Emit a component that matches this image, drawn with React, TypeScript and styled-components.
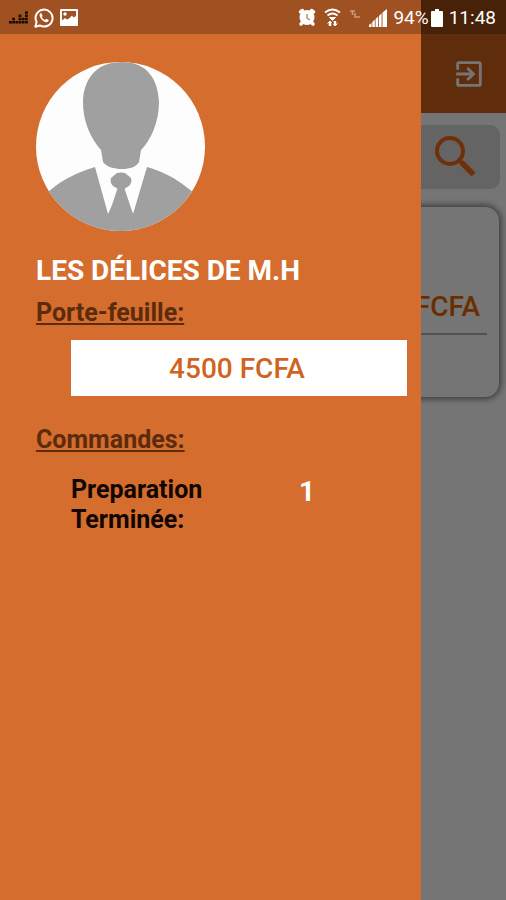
import React from "react";
import styled, { createGlobalStyle } from "styled-components";

const GlobalStyle = createGlobalStyle`
  * { box-sizing: border-box; }
  body { margin: 0; font-family: Roboto, "Liberation Sans", sans-serif; }
  button, input { font: inherit; }
`;

const Screen = styled.div`
  position: relative;
  min-height: 100vh;
  overflow: hidden;
  background: #fff;
`;

const Page = styled.main`
  display: flex;
  flex-direction: column;
`;

const AppBar = styled.header`
  display: flex;
  align-items: center;
  justify-content: flex-end;
  height: 113px;
  padding: 34px 20px 0;
  background: #d2621c;
`;

const IconButton = styled.button`
  display: flex;
  padding: 0;
  border: 0;
  background: none;
  color: ${(p) => p.color};
`;

const SearchForm = styled.form`
  display: flex;
  align-items: center;
  height: 64px;
  margin: 12px 6px 0;
  padding: 0 24px 2px;
  border-radius: 10px;
  background: #d9d9d9;
`;

const SearchInput = styled.input`
  flex: 1;
  min-width: 0;
  border: 0;
  background: transparent;
  font-size: 24px;
`;

const OrderCard = styled.article`
  display: flex;
  flex-direction: column;
  height: 190px;
  margin: 18px 7px 0;
  padding: 80px 12px 0;
  border-radius: 14px;
  background: #fff;
  box-shadow: 0 0 6px 2px rgba(0, 0, 0, 0.5);
`;

const OrderPrice = styled.div`
  padding: 0 7px 6px 0;
  border-bottom: 2px solid #b4b4b4;
  color: #e86400;
  font-size: 28px;
  font-weight: 500;
  line-height: 40px;
  text-align: right;
`;

const Scrim = styled.div`
  position: absolute;
  inset: 0;
  background: rgba(0, 0, 0, 0.54);
`;

const Drawer = styled.aside`
  position: absolute;
  inset: 0 85px 0 0;
  display: flex;
  flex-direction: column;
  align-items: stretch;
  padding: 62px 14px 0 36px;
  background: #d46d2d;
`;

const Avatar = styled.svg`
  width: 169px;
  height: 169px;
  border-radius: 50%;
  background: #fdfdfd;
`;

const ShopName = styled.h1`
  margin: 20px 0 0;
  color: #fff;
  font-size: 28px;
  font-weight: 700;
  line-height: 40px;
  white-space: nowrap;
`;

const SectionTitle = styled.h2<{ $gap: number }>`
  margin: ${(p) => p.$gap}px 0 0;
  color: #5c2b0c;
  font-size: 25px;
  font-weight: 700;
  line-height: 42px;
  text-decoration: underline;
  text-decoration-thickness: 2px;
  text-underline-offset: 2px;
  text-decoration-skip-ink: none;
`;

const Balance = styled.div`
  margin: 6px 0 0 35px;
  padding: 2px 4px 0 0;
  background: #fff;
  color: #d0641f;
  font-size: 28px;
  font-weight: 500;
  line-height: 54px;
  text-align: center;
`;

const OrderStats = styled.dl`
  display: grid;
  grid-template-columns: 2fr 1fr;
  margin: 14px 0 0 35px;
`;

const StatLabel = styled.dt`
  max-width: 150px;
  color: #120600;
  font-size: 25px;
  font-weight: 700;
  line-height: 30px;
`;

const StatValue = styled.dd`
  margin: 0;
  padding-left: 4px;
  color: #fff;
  font-size: 28px;
  font-weight: 700;
  line-height: 34px;
`;

const StatusBar = styled.div`
  position: absolute;
  inset: 0 0 auto;
  display: flex;
  align-items: center;
  justify-content: space-between;
  height: 34px;
  padding: 1px 10px 0 9px;
  background: rgba(0, 0, 0, 0.25);
  color: #fff;
  font-size: 19px;
  line-height: 34px;
`;

const StatusGroup = styled.div<{ $gap: number }>`
  display: flex;
  align-items: center;
  gap: ${(p) => p.$gap}px;
`;

const Equalizer = () => {
  const heights = [1, 2, 1, 3, 2, 4];
  return (
    <svg width="19" height="20" viewBox="0 0 19 20" fill="#1c0c04" aria-hidden="true">
      {heights.map((n, col) =>
        Array.from({ length: n }, (_, row) => (
          <rect key={`${col}-${row}`} x={col * 3.2} y={13 - row * 3.2} width="2.8" height="2.5" />
        )),
      )}
    </svg>
  );
};

const Chat = () => (
  <svg width="20" height="20" viewBox="0 0 24 24" fill="none" aria-hidden="true">
    <path d="M1.600 22.400l1.500-5.500A10.200 10.200 0 1 1 7 20.900z" stroke="#fff" strokeWidth="2.400" strokeLinejoin="round" />
    <path d="M8.800 6.200c-.8-.4-2 .8-2.100 2.200-.1 2 1.400 4.400 3.400 6.300 2 1.800 4.400 2.800 6 2.100 1.200-.5 1.800-1.600 1.500-2.400l-2.900-1.500-1.500 1.500c-1.700-.7-3-2-3.800-3.500l1-1.400z" fill="#fff" />
  </svg>
);

const Picture = () => (
  <svg width="18" height="17" viewBox="0 0 18 17" aria-hidden="true">
    <path fillRule="evenodd" fill="#fff" d="M1 0h16a1 1 0 0 1 1 1v15a1 1 0 0 1-1 1H1a1 1 0 0 1-1-1V1a1 1 0 0 1 1-1zM2 2v9.500l3-2.500 2 1.500 2-1 3-3 1.500 2L16 7V2z" />
    <circle cx="5" cy="5" r="1.700" fill="#fff" />
  </svg>
);

const Alarm = () => (
  <svg width="18" height="19" viewBox="0 0 18 19" aria-hidden="true">
    <g stroke="#fff" strokeWidth="3.500" strokeLinecap="round">
      <path d="M2.500 4l2-1.500M15.500 4l-2-1.500M3 16l2-2M15 16l-2-2" />
    </g>
    <circle cx="9" cy="9.500" r="7.500" fill="#fff" />
    <path d="M9 6v4l3 2" fill="none" stroke="#b98c76" strokeWidth="1.500" />
  </svg>
);

const Wifi = () => (
  <svg width="17" height="19" viewBox="0 0 17 19" fill="none" stroke="#fff" aria-hidden="true">
    <path d="M1 4.500q7.500-6 15 0M3.500 7.500q5-4 10 0" strokeWidth="2" />
    <path d="M5.500 9.500h6l-3 3z" fill="#fff" strokeWidth="1" />
    <path d="M6 18v-4M11 13v4" strokeWidth="2.500" />
    <path d="M3.500 15.500l2.500-2.500 1.500 2M9.500 16l1.500 2 2.500-2.500" strokeWidth="1" />
  </svg>
);

const Lte = () => (
  <svg width="12" height="20" viewBox="0 0 12 20" fill="none" stroke="#cf9b7c" aria-hidden="true">
    <path d="M1 3h5M3.500 3v4M6 5v4h5" strokeWidth="1.500" />
  </svg>
);

const Signal = () => (
  <svg width="18" height="18" viewBox="0 0 18 18" fill="#fff" aria-hidden="true">
    <path d="M0 18v-2l2.500-2v4zM3.300 18v-5l2.500-2.500V18zM6.600 18V10l2.500-2.500V18zM9.900 18V7l2.700-2.700V18zM13.500 18V3.500L18 0v18z" />
  </svg>
);

const Battery = () => (
  <svg width="12" height="18" viewBox="0 0 12 18" fill="#fff" aria-hidden="true">
    <path d="M4 0h4v2h3a1 1 0 0 1 1 1v14a1 1 0 0 1-1 1H1a1 1 0 0 1-1-1V3a1 1 0 0 1 1-1h3z" />
  </svg>
);

const Exit = () => (
  <svg width="34" height="34" viewBox="0 0 24 24" fill="currentColor" aria-hidden="true">
    <path d="M10.090 15.590L11.500 17l5-5-5-5-1.410 1.410L12.670 11H3v2h9.670l-2.580 2.590zM19 3H5a2 2 0 0 0-2 2v4h2V5h14v14H5v-4H3v4a2 2 0 0 0 2 2h14a2 2 0 0 0 2-2V5a2 2 0 0 0-2-2z" />
  </svg>
);

const Magnifier = () => (
  <svg width="42" height="42" viewBox="0 0 42 42" fill="none" stroke="currentColor" aria-hidden="true">
    <circle cx="16" cy="16" r="13" strokeWidth="4" />
    <path d="M25 25l4 4" strokeWidth="4" />
    <path d="M27.500 27.500l12 12" strokeWidth="5.500" />
  </svg>
);

const Businessman = () => (
  <Avatar viewBox="0 0 169 169" role="img" aria-label="Photo de profil">
    <g fill="#a0a0a0">
      <path d="M86 0C60 0 48 17 47 39c-.5 20 8 38 18 49l2 12c4 5 11 7 19 7s14-2 17-7l2-12c10-10 18-28 18-48C122 17 111 0 86 0z" />
      <path d="M0 169v-30c12-8 20-17 32-23 10-5 17-8 27-11l13 47 13-27 12 27 14-47c14 4 24 9 34 16l24 18v30z" />
      <path d="M81 111q4-1 8 0l6 5c1 3 0 6-2 8l-5 3h-6l-5-3c-2-2-3-5-2-8z" />
      <path d="M82 125h6l9 27H73z" />
    </g>
  </Avatar>
);

export default function App() {
  return (
    <>
      <GlobalStyle />
      <Screen>
        <Page>
          <AppBar>
            <IconButton type="button" aria-label="Se déconnecter" color="#fff">
              <Exit />
            </IconButton>
          </AppBar>
          <SearchForm role="search">
            <SearchInput type="search" aria-label="Rechercher" />
            <IconButton type="button" aria-label="Lancer la recherche" color="#f06a14">
              <Magnifier />
            </IconButton>
          </SearchForm>
          <OrderCard>
            <OrderPrice>FCFA</OrderPrice>
          </OrderCard>
        </Page>
        <Scrim />
        <Drawer>
          <Businessman />
          <ShopName>LES DÉLICES DE M.H</ShopName>
          <SectionTitle $gap={1}>Porte-feuille:</SectionTitle>
          <Balance>4500 FCFA</Balance>
          <SectionTitle $gap={23}>Commandes:</SectionTitle>
          <OrderStats>
            <StatLabel>Preparation Terminée:</StatLabel>
            <StatValue>1</StatValue>
          </OrderStats>
        </Drawer>
        <StatusBar>
          <StatusGroup $gap={6}>
            <Equalizer />
            <Chat />
            <Picture />
          </StatusGroup>
          <StatusGroup $gap={6}>
            <StatusGroup $gap={8}>
              <Alarm />
              <Wifi />
              <Lte />
              <Signal />
            </StatusGroup>
            <StatusGroup $gap={2}>
              <span>94%</span>
              <Battery />
            </StatusGroup>
            <span>11:48</span>
          </StatusGroup>
        </StatusBar>
      </Screen>
    </>
  );
}
